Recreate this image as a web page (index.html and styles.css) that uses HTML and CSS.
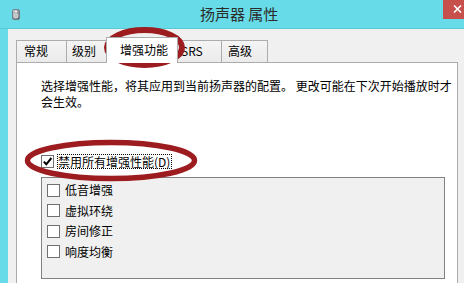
FILE: index.html
```html
<!DOCTYPE html>
<html lang="zh-CN">
<head>
<meta charset="utf-8">
<title>扬声器 属性</title>
<link rel="stylesheet" href="styles.css">
</head>
<body>
<div class="window">
  <div class="titlebar">
    <svg class="appicon" width="8" height="11" viewBox="0 0 8 11">
      <defs>
        <linearGradient id="ig" x1="0" y1="0" x2="1" y2="1">
          <stop offset="0" stop-color="#d6d9dc"/>
          <stop offset="1" stop-color="#5d6368"/>
        </linearGradient>
      </defs>
      <rect x="0.5" y="0.5" width="7" height="10" rx="1.5" fill="url(#ig)" stroke="#6a7076" stroke-width="0.8"/>
      <circle cx="4" cy="2.6" r="1.1" fill="#eef0f2"/>
      <circle cx="4" cy="6.8" r="2" fill="#b9bec3" stroke="#eef0f2" stroke-width="0.7"/>
    </svg>
    <div class="title">扬声器 属性</div>
    <div class="close">
      <svg width="9" height="8" viewBox="0 0 9 8"><path d="M1 0.5 L8 7.5 M8 0.5 L1 7.5" stroke="#fff" stroke-width="1.6"/></svg>
    </div>
  </div>
  <div class="client">
    <div class="tabs">
      <div class="tab t1">常规</div>
      <div class="tab t2">级别</div>
      <div class="tab sel">增强功能</div>
      <div class="tab t4">SRS</div>
      <div class="tab t5">高级</div>
    </div>
    <div class="panel">
      <p class="desc">选择增强性能，将其应用到当前扬声器的配置。 更改可能在下次开始播放时才<br>会生效。</p>
      <div class="main-check">
        <span class="cb"><svg width="11" height="11" viewBox="0 0 11 11"><path d="M1.8 5.6 L4.3 8.3 L9.4 2" fill="none" stroke="#000" stroke-width="2"/></svg></span>
        <span class="focus">禁用所有增强性能(D)</span>
      </div>
      <div class="group">
        <div class="item"><span class="cb"></span><span class="lbl">低音增强</span></div>
        <div class="item"><span class="cb"></span><span class="lbl">虚拟环绕</span></div>
        <div class="item"><span class="cb"></span><span class="lbl">房间修正</span></div>
        <div class="item"><span class="cb"></span><span class="lbl">响度均衡</span></div>
      </div>
    </div>
  </div>
  <svg class="marks" width="464" height="283" viewBox="0 0 464 283">
    <ellipse cx="144.5" cy="47.5" rx="37.5" ry="17.5" fill="none" stroke="#9c1c1f" stroke-width="6"/>
    <ellipse cx="111" cy="160.5" rx="83.5" ry="18" fill="none" stroke="#9c1c1f" stroke-width="5.5"/>
  </svg>
</div>
</body>
</html>
```

FILE: styles.css
```css
html, body {
  margin: 0;
  padding: 0;
}
body {
  width: 464px;
  height: 283px;
  overflow: hidden;
  background: #67dce8;
  font-family: "Noto Sans CJK SC", "Microsoft YaHei", sans-serif;
  font-size: 12px;
  color: #000;
}
.window {
  position: relative;
  width: 464px;
  height: 283px;
  display: flex;
  flex-direction: column;
}
.titlebar {
  height: 28px;
  flex: none;
  display: flex;
  align-items: center;
  border-bottom: 1px solid #5bc9d5;
}
.appicon {
  margin-left: 12px;
  flex: none;
}
.title {
  margin-left: 180px;
  font-size: 15px;
  line-height: 20px;
  color: #2b2b2b;
  white-space: nowrap;
}
.close {
  margin-left: auto;
  align-self: flex-start;
  width: 21px;
  height: 19px;
  background: #c8504c;
  display: flex;
  align-items: center;
  padding-left: 10px;
  box-sizing: border-box;
}
.close svg {
  margin-top: -2px;
}
.client {
  flex: 1;
  margin-left: 8px;
  background: #f0f0f0;
  padding: 8px 6px 0 8px;
  display: flex;
  flex-direction: column;
}
.tabs {
  display: flex;
  align-items: flex-end;
  height: 25px;
  flex: none;
}
.tab {
  box-sizing: border-box;
  height: 22px;
  border: 1px solid #acacac;
  border-bottom: none;
  background: linear-gradient(#f4f4f4, #ebebeb);
  margin-right: -1px;
  line-height: 20px;
  white-space: nowrap;
}
.t1 { width: 51px; padding-left: 7px; }
.t2 { width: 43px; padding-left: 5px; }
.t4 { width: 46px; padding-left: 4px; }
.t5 { width: 47px; padding-left: 6px; }
.tab.sel {
  position: relative;
  z-index: 1;
  width: 72px;
  height: 26px;
  margin: 0 -2px -1px -2px;
  padding-left: 13px;
  background: #fff;
  line-height: 24px;
}
.panel {
  flex: 1;
  background: #fff;
  border: 1px solid #acacac;
  border-bottom: none;
  padding: 15px 0 0 24px;
}
.desc {
  margin: 0;
  width: 420px;
  line-height: 16px;
  white-space: nowrap;
  text-spacing-trim: space-all;
}
.main-check {
  margin-top: 44px;
  height: 15px;
  display: flex;
  align-items: center;
}
.cb {
  box-sizing: border-box;
  width: 13px;
  height: 13px;
  border: 1px solid #707070;
  background: #fff;
  flex: none;
  display: flex;
}
.main-check .cb {
  margin-top: -1px;
}
.focus {
  margin-left: 3px;
  border: 1px dotted #000;
  padding: 0 1px 0 0;
  line-height: 13px;
  white-space: nowrap;
}
.group {
  box-sizing: border-box;
  margin-top: 8px;
  width: 404px;
  height: 102px;
  border: 1px solid #828282;
  background: #f0f0f0;
  padding: 2px 0 0 5px;
}
.item {
  height: 20.5px;
  display: flex;
  align-items: center;
}
.lbl {
  margin-left: 5px;
  line-height: 16px;
}
.marks {
  position: absolute;
  left: 0;
  top: 0;
  pointer-events: none;
}
```
